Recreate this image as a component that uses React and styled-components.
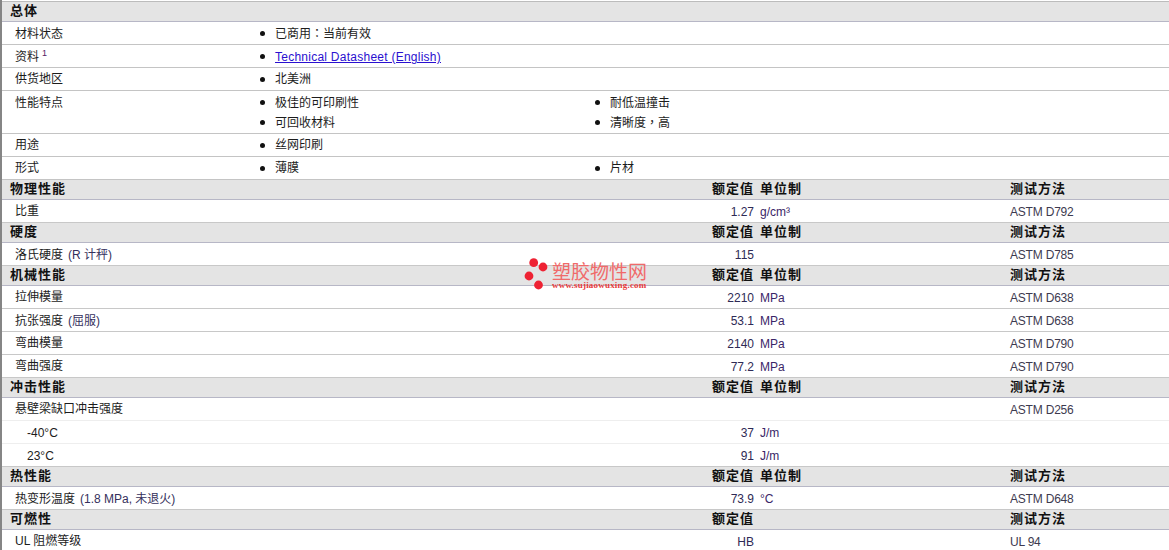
import React from "react";
import styled, { createGlobalStyle } from "styled-components";

const GlobalStyle = createGlobalStyle`
html, body {
  margin: 0;
  padding: 0;
  background: #fff;
}
body {
  font-family: "Liberation Sans", "Noto Sans CJK SC", sans-serif;
  font-size: 12px;
  color: #1c1c1c;
}
`;

const Page = styled.div`
position: relative;
width: 1169px;
height: 550px;
overflow: hidden;
box-sizing: border-box;
border-left: 2px solid #858585;
`;
const TopLine = styled.div`
height: 1px;
margin-top: 1px;
background: #bcbcbc;
`;
const Head = styled.div`
display: grid;
grid-template-columns: 8px 700px 44px 6px 250px 1fr;
height: 19px;
line-height: 18px;
background-color: #e4e4e4;
background-image: radial-gradient(#dbdbdb 0.6px, transparent 0.7px);
background-size: 9px 6px;
border-bottom: 1px solid #b7b7c6;
font-size: 13px;
font-weight: bold;
letter-spacing: 1px;
color: #111;
`;
const HeadTitle = styled.div`
grid-column: 2;
`;
const HeadValue = styled.div`
grid-column: 3;
justify-self: end;
white-space: nowrap;
`;
const HeadUnit = styled.div`
grid-column: 5;
`;
const HeadMethod = styled.div`
grid-column: 6;
`;
const Row = styled.div`
display: grid;
grid-template-columns: 13px 245px 1fr;
height: ${p => p.$h || 22}px;
line-height: ${p => (p.$tight ? 22 : 24)}px;
border-bottom: 1px solid #c4c4c4;
`;
const Label = styled.div`
grid-column: 2;
`;
const Sup = styled.sup`
font-size: 9px;
color: #552266;
margin-left: 3px;
line-height: 0;
`;
const Items = styled.ul`
grid-column: 3;
display: grid;
grid-template-columns: 335px 1fr;
grid-auto-rows: 20px;
margin: 0;
padding: 0 0 0 15px;
list-style: none;
`;
const Item = styled.li`
display: flex;
font-family: ${p => (p.$punct ? '"Liberation Sans", "Noto Sans CJK TC", sans-serif' : "inherit")};
`;
const Bullet = styled.span`
width: 15px;
margin-left: -15px;
&::before {
  content: "";
  display: block;
  width: 5px;
  height: 5px;
  margin-top: 9px;
  border-radius: 50%;
  background: #111;
}
`;
const Link = styled.a`
color: #2a10d0;
letter-spacing: 0.25px;
text-decoration: underline;
`;
const DataRow = styled.div`
display: grid;
grid-template-columns: 13px 695px 44px 6px 250px 1fr;
height: 22px;
line-height: 22px;
border-bottom: 1px solid ${p => (p.$light ? "#eeeeee" : "#c8c8c8")};
`;
const DataLabel = styled.div`
grid-column: 2;
padding-left: ${p => (p.$indent ? 12 : 0)}px;
padding-top: ${p => (p.$low ? 1 : 0)}px;
`;
const Hint = styled.span`
color: #35305c;
margin-left: 5px;
`;
const DataValue = styled.div`
grid-column: 3;
justify-self: end;
padding-top: 1px;
color: #2e2a55;
`;
const DataUnit = styled.div`
grid-column: 5;
padding-top: 1px;
color: #3a2668;
`;
const DataMethod = styled.div`
grid-column: 6;
padding-top: 1px;
color: #3d3a4f;
letter-spacing: -0.2px;
`;
const Watermark = styled.div`
position: absolute;
left: 520px;
top: 256px;
display: flex;
gap: 2px;
pointer-events: none;
`;
const MarkText = styled.div`
display: flex;
flex-direction: column;
padding-top: 7px;
`;
const MarkName = styled.span`
font-size: 19px;
line-height: 19px;
color: #f06a6a;
`;
const MarkUrl = styled.span`
font-family: "Liberation Serif", serif;
font-size: 9px;
font-weight: bold;
letter-spacing: 0.2px;
line-height: 7px;
color: #e83a3a;
`;

const general = [
  { label: "材料状态", items: ["已商用：当前有效"] },
  { label: "资料", sup: "1", link: "Technical Datasheet (English)" },
  { label: "供货地区", tight: true, items: ["北美洲"] },
  { label: "性能特点", h: 42, items: ["极佳的可印刷性", "耐低温撞击", "可回收材料", "清晰度，高"] },
  { label: "用途", tight: true, items: ["丝网印刷"] },
  { label: "形式", tight: true, items: ["薄膜", "片材"] },
];

const sections = [
  { title: "物理性能", rows: [{ label: "比重", value: "1.27", unit: "g/cm³", method: "ASTM D792" }] },
  { title: "硬度", rows: [{ label: "洛氏硬度", hint: "(R 计秤)", value: "115", method: "ASTM D785" }] },
  {
    title: "机械性能",
    rows: [
      { label: "拉伸模量", value: "2210", unit: "MPa", method: "ASTM D638" },
      { label: "抗张强度", hint: "(屈服)", value: "53.1", unit: "MPa", method: "ASTM D638" },
      { label: "弯曲模量", value: "2140", unit: "MPa", method: "ASTM D790" },
      { label: "弯曲强度", value: "77.2", unit: "MPa", method: "ASTM D790" },
    ],
  },
  {
    title: "冲击性能",
    rows: [
      { label: "悬壁梁缺口冲击强度", method: "ASTM D256", light: true },
      { label: "-40°C", indent: true, value: "37", unit: "J/m", light: true },
      { label: "23°C", indent: true, value: "91", unit: "J/m" },
    ],
  },
  { title: "热性能", rows: [{ label: "热变形温度", hint: "(1.8 MPa, 未退火)", value: "73.9", unit: "°C", method: "ASTM D648" }] },
  { title: "可燃性", noUnit: true, rows: [{ label: "UL 阻燃等级", value: "HB", method: "UL 94" }] },
];

function App() {
  return (
    <Page>
      <GlobalStyle />
      <TopLine />
      <Head><HeadTitle>总体</HeadTitle></Head>
      {general.map(row => (
        <Row key={row.label} $h={row.h} $tight={row.tight}>
          <Label>
            {row.label}
            {row.sup && <Sup>{row.sup}</Sup>}
          </Label>
          <Items>
            {row.link && (
              <Item><Bullet /><Link href="#">{row.link}</Link></Item>
            )}
            {row.items && row.items.map(text => (
              <Item key={text} $punct={/[：，]/.test(text)}><Bullet />{text}</Item>
            ))}
          </Items>
        </Row>
      ))}
      {sections.map(section => (
        <React.Fragment key={section.title}>
          <Head>
            <HeadTitle>{section.title}</HeadTitle>
            <HeadValue>额定值</HeadValue>
            {!section.noUnit && <HeadUnit>单位制</HeadUnit>}
            <HeadMethod>测试方法</HeadMethod>
          </Head>
          {section.rows.map(row => (
            <DataRow key={row.label} $light={row.light}>
              <DataLabel $indent={row.indent} $low={row.indent || row.hint}>
                {row.label}
                {row.hint && <Hint>{row.hint}</Hint>}
              </DataLabel>
              <DataValue>{row.value}</DataValue>
              <DataUnit>{row.unit}</DataUnit>
              <DataMethod>{row.method}</DataMethod>
            </DataRow>
          ))}
        </React.Fragment>
      ))}
      <Watermark>
        <svg width="28" height="36" viewBox="0 0 28 36">
          <circle cx="11.7" cy="6.7" r="4.4" fill="#ee2233" />
          <circle cx="21" cy="11" r="4.4" fill="#ee2233" />
          <circle cx="7" cy="20" r="4.4" fill="#ee2233" />
          <circle cx="16.5" cy="29" r="4.4" fill="#ee2233" />
        </svg>
        <MarkText>
          <MarkName>塑胶物性网</MarkName>
          <MarkUrl>www.sujiaowuxing.com</MarkUrl>
        </MarkText>
      </Watermark>
    </Page>
  );
}

export default App;
